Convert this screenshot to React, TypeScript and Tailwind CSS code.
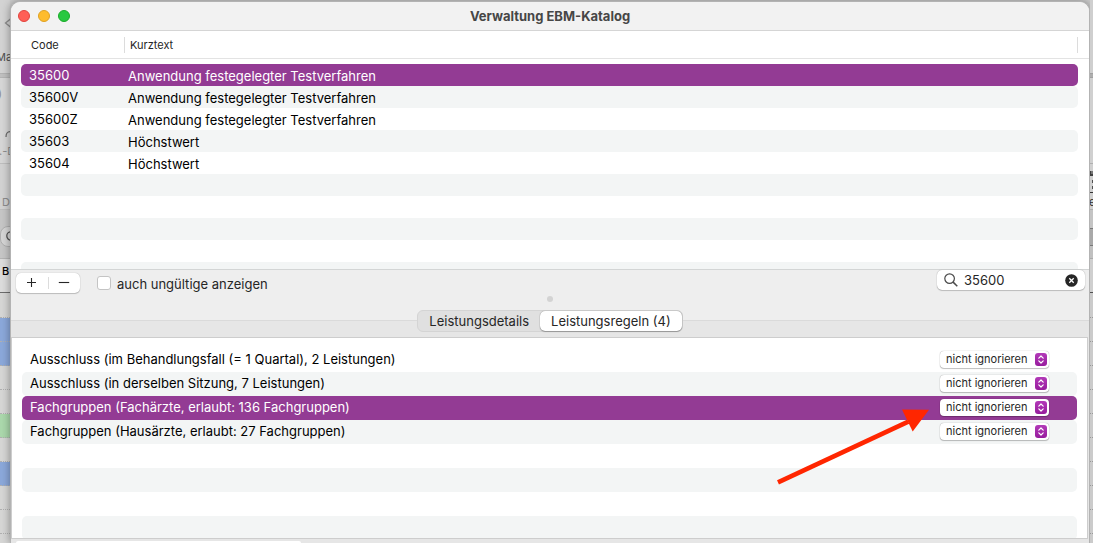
import { useState } from "react";

type Service = { code: string; text: string };

const services: Service[] = [
  { code: "35600", text: "Anwendung festegelegter Testverfahren" },
  { code: "35600V", text: "Anwendung festegelegter Testverfahren" },
  { code: "35600Z", text: "Anwendung festegelegter Testverfahren" },
  { code: "35603", text: "Höchstwert" },
  { code: "35604", text: "Höchstwert" },
  { code: "", text: "" },
  { code: "", text: "" },
  { code: "", text: "" },
  { code: "", text: "" },
  { code: "", text: "" },
];

const rules = [
  "Ausschluss (im Behandlungsfall (= 1 Quartal), 2 Leistungen)",
  "Ausschluss (in derselben Sitzung, 7 Leistungen)",
  "Fachgruppen (Fachärzte, erlaubt: 136 Fachgruppen)",
  "Fachgruppen (Hausärzte, erlaubt: 27 Fachgruppen)",
];

const calendarCells = [
  "bg-[#d6d6d5]",
  "bg-[#8ba8da]",
  "bg-[#8ba8da]",
  "bg-[#d6d6d5]",
  "bg-[#d6d6d5]",
  "bg-[#abd8ac]",
  "bg-[#d6d6d5]",
  "bg-[#8ba8da]",
  "bg-[#d6d6d5]",
  "bg-[#d6d6d5]",
  "bg-[#d6d6d5]",
];

function BackdropLeft() {
  return (
    <div className="flex w-[10px] shrink-0 flex-col overflow-hidden whitespace-nowrap text-[11px] leading-[14px] text-[#505050]">
      <div className="flex h-[73px] shrink-0 flex-col justify-between bg-[#d3d3d3] pt-[17px] pb-[9px]">
        <svg className="ml-1 h-3 w-[7px]" viewBox="0 0 7 12" fill="none" stroke="#8c8c8c" strokeWidth="1.3">
          <path d="M7 1.5 1.5 6 7 10.5" />
        </svg>
        <span className="-ml-1">Ma</span>
      </div>
      <div className="h-[5px] shrink-0 border-y border-[#b4b4b4] bg-[#c0c0c0]" />
      <div className="flex h-[86px] shrink-0 flex-col justify-between border-b border-[#bebebe] bg-[#d6d6d6] pt-[8px] pb-[5px] text-[#8c8c8c]">
        <span className="-ml-[2px]">)</span>
        <div className="flex flex-col">
          <svg className="ml-[5px] h-[14px] w-[6px]" viewBox="0 0 6 14" fill="none" stroke="#666" strokeWidth="1.2">
            <path d="M1 10C1 6 2 4.5 6 4.5" />
          </svg>
          <span className="mt-[3px] -ml-px">.-D</span>
        </div>
      </div>
      <div className="flex h-[46px] shrink-0 items-end border-b border-[#bebebe] bg-[#d2d2d2] pl-[2px] text-[#8c8c8c]">D</div>
      <div className="flex h-[49px] shrink-0 items-center border-b border-[#b4b4b4] bg-[#c6c6c6] pt-1">
        <div className="flex h-[21px] w-5 shrink-0 items-center rounded-l-lg border border-[#b0b0b0] bg-[#d6d6d6] pl-[5px]">
          <svg className="size-3 shrink-0" viewBox="0 0 12 12" fill="none" stroke="#505050" strokeWidth="1.3">
            <circle cx="5" cy="6" r="4.2" />
          </svg>
        </div>
      </div>
      <div className="flex h-[34px] shrink-0 items-center border-b border-[#6c6c6c] bg-[#dcdcdc] pb-[10px] pl-[2px] font-medium text-black">B</div>
      <div className="shrink-0 bg-[#d6d6d5] pt-px">
        {calendarCells.map((tone, i) => (
          <div key={i} className={`h-6 border-b border-dotted border-[#b0b0b0] ${tone}`} />
        ))}
      </div>
    </div>
  );
}

function BackdropRight() {
  return (
    <div className="flex w-[3px] shrink-0 flex-col overflow-hidden text-[11px] leading-[14px] text-[#303030]">
      <div className="h-[73px] shrink-0 bg-[#cfcfcf]" />
      <div className="h-[5px] shrink-0 border-y border-[#a0a0a0] bg-[#adadad]" />
      <div className="h-[86px] shrink-0 border-b border-[#b0b0b0] bg-[#d0d0d0]" />
      <div className="flex h-[46px] shrink-0 flex-col border-b border-[#b0b0b0] bg-[#d0d0d0] pt-[7px]">
        <div className="h-[5px] shrink-0 border-b-2 border-l border-[#404040] bg-[#777]" />
        <div className="flex h-[17px] shrink-0 flex-col justify-center gap-[3px] border-b border-[#333] pl-[2px]">
          <span className="size-[3px] bg-[#505050]" />
          <span className="size-[3px] bg-[#505050]" />
        </div>
        <span className="mt-[2px] -ml-px">e</span>
      </div>
      <div className="h-[19px] shrink-0 border-b border-[#777] bg-[#c4c4c4]" />
      <div className="h-[17px] shrink-0 border-b border-[#777] bg-[#a9a9a9]" />
      <div className="h-[13px] shrink-0 border-b border-[#aaa] bg-[#c0c0c0]" />
      <div className="h-[34px] shrink-0 border-b border-[#505050] bg-[#cfcfcf]" />
      <div className="shrink-0 bg-[#cbcbcb] pt-px">
        {calendarCells.map((_, i) => (
          <div key={i} className="h-6 border-b border-dotted border-[#999]" />
        ))}
      </div>
    </div>
  );
}

function ServiceTable() {
  const [selected, setSelected] = useState(0);
  return (
    <div className="h-[239px] shrink-0 overflow-hidden border-b border-[#d3d5d5] bg-white bg-[linear-gradient(#e3e3e3,#e3e3e3)] bg-[length:100%_1px] bg-[position:0_27px] bg-no-repeat pr-[11px] pl-[10px]">
      <table className="w-full table-fixed border-separate border-spacing-0 text-left">
        <thead>
          <tr className="text-[11px] leading-4 text-[#262626]">
            <th scope="col" className="h-[33px] w-[104px] p-0 pb-[5px] font-normal">
              <span className="block border-r border-[#dcdcdc] pl-[10px]">Code</span>
            </th>
            <th scope="col" className="p-0 pb-[5px] font-normal">
              <span className="block border-r border-[#dcdcdc] pl-[5px]">Kurztext</span>
            </th>
          </tr>
        </thead>
        <tbody className="text-[13px] leading-5">
          {services.map((s, i) => {
            const tone =
              i === selected ? "bg-[#933b94] text-white" : i % 2 === 1 ? "bg-[#f3f5f5] text-black" : "text-black";
            return (
              <tr key={i} onClick={() => s.code && setSelected(i)}>
                <td className={`h-[22px] rounded-l-[5px] p-0 pl-2 ${tone}`}>{s.code}</td>
                <td className={`h-[22px] rounded-r-[5px] p-0 pt-[2px] pl-[3px] ${tone}`}>{s.text}</td>
              </tr>
            );
          })}
        </tbody>
      </table>
    </div>
  );
}

function Toolbar() {
  return (
    <div className="flex h-[25px] shrink-0 items-start justify-between pr-1 pl-[5px]">
      <div className="flex items-center pt-[2px]">
        <div className="flex h-5 w-16 items-center rounded-[5px] bg-white shadow-[0_0_1px_#00000055,0_1px_1px_#00000030]">
          <button type="button" aria-label="Hinzufügen" className="flex flex-1 justify-center text-[#262626]">
            <svg className="size-[10px]" viewBox="0 0 10 10" stroke="currentColor" strokeWidth="1.1">
              <path d="M4.5 0v9M0 4.5h9" />
            </svg>
          </button>
          <span className="h-3 w-px bg-[#dcdcdc]" />
          <button type="button" aria-label="Entfernen" className="flex flex-1 justify-center text-[#262626]">
            <svg className="h-[10px] w-3" viewBox="0 0 12 10" stroke="currentColor" strokeWidth="1.1">
              <path d="M.8 4.5h10.4" />
            </svg>
          </button>
        </div>
        <label className="ml-[17px] flex items-center gap-[6px] text-[13px] leading-5 text-[#262626]">
          <input
            type="checkbox"
            className="size-[14px] appearance-none rounded-[3px] border border-[#c4c4c4] bg-white checked:bg-[#933b94]"
          />
          <span className="pt-[2px]">auch ungültige anzeigen</span>
        </label>
      </div>
      <div className="flex h-5 w-[148px] items-center rounded-[5px] bg-white px-[7px] shadow-[0_0_1px_#00000060,0_1px_1px_#00000030]">
        <svg className="size-[14px] shrink-0" viewBox="0 0 14 14" fill="none" stroke="#4a4a4a" strokeWidth="1.2">
          <circle cx="5.6" cy="5.6" r="4.8" />
          <path d="m9.1 9.1 4.2 4.2" strokeWidth="1.5" />
        </svg>
        <input
          type="text"
          aria-label="Suche"
          defaultValue="35600"
          className="ml-[6px] w-0 flex-1 bg-transparent text-[13px] leading-4 text-[#262626] outline-none"
        />
        <button type="button" aria-label="Suche löschen" className="shrink-0">
          <svg className="size-[13px]" viewBox="0 0 13 13">
            <circle cx="6.5" cy="6.5" r="6.3" fill="#262626" />
            <path d="m4.3 4.3 4.4 4.4m0-4.4L4.3 8.7" stroke="#fff" strokeWidth="1.3" />
          </svg>
        </button>
      </div>
    </div>
  );
}

function RuleSelect({ id }: { id: string }) {
  return (
    <div className="relative w-[109px]">
      <select
        id={id}
        className="block h-[17px] w-full appearance-none rounded-[4px] bg-white pl-[6px] text-[11px] leading-4 text-[#262626] shadow-[0_0_1px_#00000070,0_1px_1px_#00000038] outline-none"
      >
        <option>nicht ignorieren</option>
        <option>ignorieren</option>
      </select>
      <svg className="pointer-events-none absolute top-[2px] right-[2px] h-[13px] w-3" viewBox="0 0 12 13" fill="none">
        <defs>
          <linearGradient id={`${id}-fill`} x1="0" y1="0" x2="0" y2="1">
            <stop stopColor="#b23ab8" />
            <stop offset="1" stopColor="#971c9d" />
          </linearGradient>
        </defs>
        <rect width="12" height="13" rx="3" fill={`url(#${id}-fill)`} />
        <path d="M3.8 5.1 6 3l2.2 2.1M3.8 7.9 6 10l2.2-2.1" stroke="#fff" strokeWidth="1.2" strokeLinecap="round" strokeLinejoin="round" />
      </svg>
    </div>
  );
}

function RuleList() {
  return (
    <div className="relative mr-px min-h-0 flex-1 overflow-hidden border border-[#cdcdcd] bg-white px-[10px] pt-[10px]">
      <ul className="text-[13px] leading-5">
        {Array.from({ length: 8 }, (_, i) => {
          const tone = i === 2 ? "bg-[#933b94] text-white" : i % 2 === 1 ? "bg-[#f3f5f5] text-black" : "text-black";
          return (
            <li key={i} className={`flex h-6 items-center justify-between rounded-[5px] pr-7 pb-[2px] pl-2 ${tone}`}>
              {rules[i] && (
                <>
                  <label htmlFor={`rule-${i}`}>{rules[i]}</label>
                  <RuleSelect id={`rule-${i}`} />
                </>
              )}
            </li>
          );
        })}
      </ul>
      <svg
        className="pointer-events-none absolute top-[66px] right-[157px] h-[85px] w-[160px]"
        viewBox="0 0 160 85"
        fill="#ff2600"
      >
        <path d="M8 78.4 138.3 17.6" stroke="#ff2600" strokeWidth="4.6" />
        <path d="M132 5.4 159 5.7 142.7 27.4Z" />
      </svg>
    </div>
  );
}

export default function App() {
  const [tab, setTab] = useState(1);
  const tabs = ["Leistungsdetails", "Leistungsregeln (4)"];
  return (
    <div className="flex h-screen overflow-hidden bg-[#cdcdcd] font-['Inter','Liberation_Sans',sans-serif]">
      <BackdropLeft />
      <main className="mt-px flex min-w-0 flex-1 flex-col overflow-hidden rounded-t-[10px] border-x border-t border-[#b3b3b3] bg-[#e6e6e6] shadow-[0_0_8px_#00000060]">
        <header className="grid h-[29px] shrink-0 grid-cols-[1fr_auto_1fr] items-center border-b border-[#d5d5d5] bg-[#f2f2f2]">
          <div className="flex gap-2 pl-[7px]">
            <button type="button" aria-label="Schließen" className="size-3 rounded-full border border-[#e0443e] bg-[#ff5f57]" />
            <button type="button" aria-label="Minimieren" className="size-3 rounded-full border border-[#dea123] bg-[#febc2e]" />
            <button type="button" aria-label="Zoomen" className="size-3 rounded-full border border-[#1aab29] bg-[#28c840]" />
          </div>
          <h1 className="text-[13px] leading-4 font-bold text-[#464646]">Verwaltung EBM-Katalog</h1>
        </header>
        <ServiceTable />
        <div className="shrink-0 bg-[#eeeeee]">
          <Toolbar />
          <div className="flex h-[15px] justify-center pt-[1px]">
            <span className="size-[6px] rounded-full bg-[#d3d3d3]" />
          </div>
        </div>
        <div className="flex h-[27px] shrink-0 items-start justify-center bg-[linear-gradient(#eeeeee_10px,#dadada_10px,#dadada_11px,#e6e6e6_11px)]">
          <div role="tablist" className="flex h-[22px] rounded-[6px] border border-[#d4d4d4] bg-[#e0e0e0]">
            {tabs.map((name, i) => (
              <button
                key={name}
                type="button"
                role="tab"
                aria-selected={tab === i}
                onClick={() => setTab(i)}
                className={`rounded-[5px] px-[11px] text-[13px] leading-5 text-[#262626] ${
                  tab === i ? "bg-white shadow-[0_0_1px_#00000080,0_1px_1px_#00000040]" : ""
                }`}
              >
                {name}
              </button>
            ))}
          </div>
        </div>
        <RuleList />
        <footer className="h-[4px] shrink-0 pt-[2px] pl-[5px]">
          <div className="h-[2px] w-[285px] rounded-t-[4px] bg-white" />
        </footer>
      </main>
      <BackdropRight />
    </div>
  );
}
